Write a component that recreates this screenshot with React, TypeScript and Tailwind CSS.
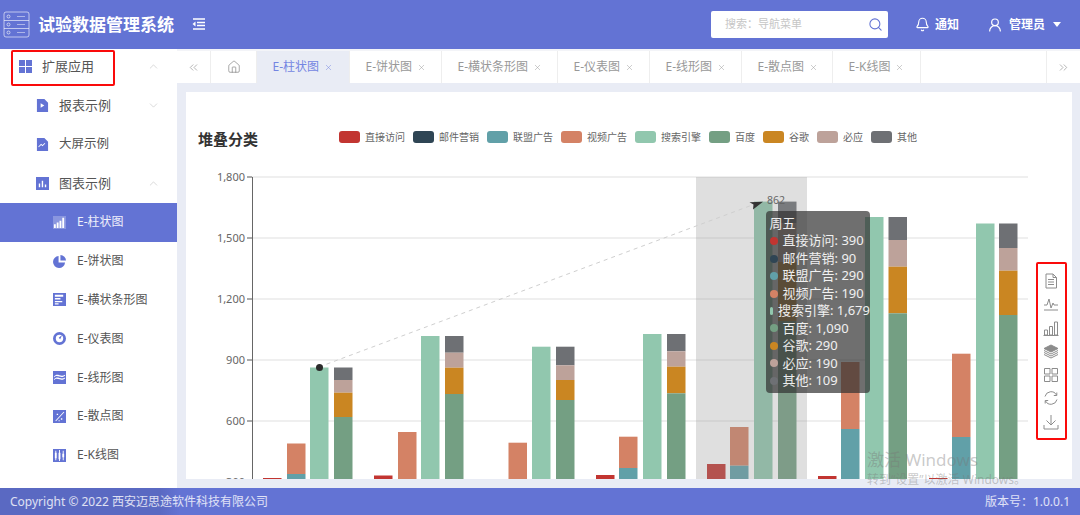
import { Bell, ChevronDown, ChevronsLeft, ChevronsRight, ChevronUp, House, Search, UserRound, X } from "lucide-react";
import type { ReactNode } from "react";

const c = {
  red: "#c23531",
  navy: "#2f4554",
  teal: "#61a0a8",
  orange: "#d48265",
  mint: "#91c7ae",
  green: "#749f83",
  gold: "#ca8622",
  rose: "#bda29a",
  gray: "#6e7074",
};

const legend = [
  { name: "直接访问", color: c.red },
  { name: "邮件营销", color: c.navy },
  { name: "联盟广告", color: c.teal },
  { name: "视频广告", color: c.orange },
  { name: "搜索引擎", color: c.mint },
  { name: "百度", color: c.green },
  { name: "谷歌", color: c.gold },
  { name: "必应", color: c.rose },
  { name: "其他", color: c.gray },
];

const tooltipRows = [
  { name: "直接访问", value: "390", color: c.red },
  { name: "邮件营销", value: "90", color: c.navy },
  { name: "联盟广告", value: "290", color: c.teal },
  { name: "视频广告", value: "190", color: c.orange },
  { name: "搜索引擎", value: "1,679", color: c.mint },
  { name: "百度", value: "1,090", color: c.green },
  { name: "谷歌", value: "290", color: c.gold },
  { name: "必应", value: "190", color: c.rose },
  { name: "其他", value: "109", color: c.gray },
];

// x of each bar group, then the tops of the stacked segments in page pixels
const groups = [
  { x: [263, 287, 310, 334], red: 478, orange: [443.5, 474], mint: 367.5, dark: [367.5, 380, 392.7, 417] },
  { x: [374, 398, 421, 445], red: 475.5, orange: [432, 490], mint: 336, dark: [336, 352.7, 367.7, 394] },
  { x: [485, 508.5, 532, 556], red: 490, orange: [442.7, 490], mint: 346.7, dark: [346.7, 365.3, 380, 400] },
  { x: [596, 619, 643, 667], red: 475, orange: [436.7, 468], mint: 334, dark: [334, 351.3, 366.7, 393.3] },
  { x: [707, 730, 754, 778], red: 464, orange: [427, 465.7], mint: 201.6, dark: [201.6, 223.4, 262, 321] },
  { x: [818, 841, 865, 888.5], red: 476, orange: [362, 429], mint: 217, dark: [217, 240, 266.7, 313.3] },
  { x: [929, 952, 976, 999], red: 478, orange: [353.7, 437], mint: 223.5, dark: [223.5, 248, 270.7, 315] },
];

const axis = [
  { label: "1,800", y: 177 },
  { label: "1,500", y: 238 },
  { label: "1,200", y: 299 },
  { label: "900", y: 360 },
  { label: "600", y: 421 },
  { label: "300", y: 482 },
];

const tabs = [
  { name: "E-柱状图", w: "w-[93px]", active: true },
  { name: "E-饼状图", w: "w-[92px]" },
  { name: "E-横状条形图", w: "w-[116px]" },
  { name: "E-仪表图", w: "w-[92px]" },
  { name: "E-线形图", w: "w-[92px]" },
  { name: "E-散点图", w: "w-[91px]" },
  { name: "E-K线图", w: "w-[88px]" },
];

const Glyph = ({ children, className = "text-[#6373d4]" }: { children: ReactNode; className?: string }) => (
  <svg viewBox="0 0 14 14" className={`h-[13px] w-[13px] shrink-0 ${className}`} fill="currentColor">
    {children}
  </svg>
);

const subItems: { name: string; icon: ReactNode; active?: boolean }[] = [
  {
    name: "E-柱状图",
    active: true,
    icon: (
      <>
        <path d="M0 0h14v14H0z" opacity=".25" />
        <path d="M1 9h2v4H1zM4 7h2v6H4zM7 5h2v8H7zM10 2h2v11h-2z" />
      </>
    ),
  },
  {
    name: "E-饼状图",
    icon: <path d="M6 1a6.5 6.5 0 1 0 7 7H6zM8 0v6h6a6 6 0 0 0-6-6z" />,
  },
  {
    name: "E-横状条形图",
    icon: <path fillRule="evenodd" d="M0 0h14v14H0zM2 2v2h9V2zM2 5.5v1.5h6V5.5zM2 8.5V10h8V8.5zM2 11v1.5h4V11z" />,
  },
  {
    name: "E-仪表图",
    icon: <path fillRule="evenodd" d="M7 0a7 7 0 1 1 0 14A7 7 0 0 1 7 0zm0 3a4 4 0 1 0 0 8 4 4 0 0 0 0-8zm3 0L6.2 6.2l1.5 1.5z" />,
  },
  {
    name: "E-线形图",
    icon: (
      <path
        fillRule="evenodd"
        d="M0 0h14v14H0zM1 7c2-2 3-2 6-1s4 0 6-1v-1c-2 1-3 1.600-6 .6S3 4 1 6zM1 10c2-2 3-2 6-1s4 0 6-1V7c-2 1-3 1.600-6 .6S3 7 1 9z"
      />
    ),
  },
  {
    name: "E-散点图",
    icon: <path fillRule="evenodd" d="M0 0h14v14H0zM11.500 2l-9 9.500.7.5 9-9.500zM4 4h1.500v1.500H4zM8.500 9H10v1.500H8.500zM6 11h1.200v1.200H6z" />,
  },
  {
    name: "E-K线图",
    icon: <path fillRule="evenodd" d="M0 0h14v14H0zM2.500 2v2H2v6h.5v2h1v-2H4V4h-.5V2zM6.500 1v3H6v7h.5v2h1v-2H8V4h-.5V1zM10.500 2v3H10v4h.5v3h1V9h.5V5h-.5V2z" />,
  },
];

const ToolIcon = ({ children }: { children: ReactNode }) => (
  <svg viewBox="0 0 16 16" className="h-4 w-4" fill="none" stroke="#8c8c8c" strokeWidth="1">
    {children}
  </svg>
);

const Chart = () => (
  <svg viewBox="186 165 886 314" className="block h-[314px] w-[886px]" fontSize="11">
    {axis.map((a) => (
      <g key={a.label}>
        <line x1="247" x2="1028" y1={a.y} y2={a.y} stroke="#e0e0e0" strokeWidth="1.2" />
        <line x1="247" x2="252" y1={a.y} y2={a.y} stroke="#666" />
        <text x="245" y={a.y + 4} textAnchor="end" fill="#666">
          {a.label}
        </text>
      </g>
    ))}
    <line x1="252.500" x2="252.500" y1="177" y2="479" stroke="#666" />
    {groups.map((g) => (
      <g key={g.x[0]}>
        <rect x={g.x[0]} y={g.red} width="18.500" height={490 - g.red} fill={c.red} />
        <rect x={g.x[1]} y={g.orange[0]} width="18.500" height={g.orange[1] - g.orange[0]} fill={c.orange} />
        <rect x={g.x[1]} y={g.orange[1]} width="18.500" height={490 - g.orange[1]} fill={c.teal} />
        <rect x={g.x[2]} y={g.mint} width="18.500" height={490 - g.mint} fill={c.mint} />
        <rect x={g.x[3]} y={g.dark[0]} width="18.500" height={g.dark[1] - g.dark[0]} fill={c.gray} />
        <rect x={g.x[3]} y={g.dark[1]} width="18.500" height={g.dark[2] - g.dark[1]} fill={c.rose} />
        <rect x={g.x[3]} y={g.dark[2]} width="18.500" height={g.dark[3] - g.dark[2]} fill={c.gold} />
        <rect x={g.x[3]} y={g.dark[3]} width="18.500" height={490 - g.dark[3]} fill={c.green} />
      </g>
    ))}
    <rect x="696" y="177" width="111" height="302" fill="rgb(150 150 150 / 0.3)" />
    <line x1="319" y1="367" x2="755" y2="204" stroke="#cfcfcf" strokeDasharray="4 4" />
    <circle cx="319.500" cy="367.500" r="3.500" fill="#2b2b2b" />
    <path d="M763 201.700 L749.500 202.300 L753.500 204.500 L753 209.500 Z" fill="#333" />
    <text x="767" y="204" fill="#666" fontSize="10.500">
      862
    </text>
  </svg>
);

export default function App() {
  return (
    <div className="relative flex h-[515px] w-[1080px] flex-col overflow-hidden bg-white [font-family:'Noto_Sans','Noto_Sans_CJK_SC',sans-serif]">
      <header className="relative z-10 flex h-[49px] shrink-0 items-center bg-[#6373d4] text-white">
        <div className="flex w-[177px] items-center pl-[3px]">
          <svg viewBox="0 0 27 27" className="h-[27px] w-[27px] shrink-0 text-white/60" fill="none" stroke="currentColor">
            <rect x="1" y="1" width="25" height="25" rx="2" />
            <path d="M1 9.500h25M1 17.500h25" />
            <circle cx="5.500" cy="5.500" r="1.500" />
            <circle cx="5.500" cy="13.500" r="1.500" />
            <circle cx="5.500" cy="21.500" r="1.500" />
            <path d="M14 5.500h8M14 13.500h8M14 21.500h8" strokeWidth=".8" />
          </svg>
          <span className="ml-[8px] whitespace-nowrap text-[17px] leading-none font-bold">试验数据管理系统</span>
        </div>
        <svg viewBox="0 0 13 12" className="ml-[15px] -mt-[1px] h-[12px] w-[13px]" stroke="white" strokeWidth="1.300" fill="white">
          <path d="M1 1h12M5 4.500h8M5 7.500h8M1 11h12" />
          <path d="M3.500 3.500v5L.5 6z" stroke="none" />
        </svg>
        <div className="ml-[506px] flex h-[27px] w-[177px] items-center justify-between rounded-[2px] bg-white pr-[5px] pl-[14px]">
          <span className="text-[11px] text-[#c6c6c6]">搜索：导航菜单</span>
          <Search size={15} className="text-[#6373d4]" strokeWidth={1.700} />
        </div>
        <Bell size={15} className="ml-[27px]" strokeWidth={1.800} />
        <span className="ml-[5px] text-[12px] font-bold">通知</span>
        <UserRound size={16} className="ml-[28px]" strokeWidth={1.800} />
        <span className="ml-[6px] text-[12px] font-bold">管理员</span>
        <span className="ml-[8px] h-0 w-0 border-x-[4.500px] border-t-[5px] border-x-transparent border-t-white" />
      </header>

      <div className="flex min-h-0 flex-1">
        <aside className="w-[177px] shrink-0 bg-white text-[#555]">
          <div className="relative -mt-[2px] flex h-[39px] items-center pr-[17px] pl-[19px] text-[13px]">
            <svg viewBox="0 0 13 13" className="h-[13px] w-[13px]" fill="#6373d4">
              <path d="M0 0h6v6H0zM7 0h6v6H7zM0 7h6v6H0zM7 7h6v6H7z" />
            </svg>
            <span className="ml-[10px] flex-1">扩展应用</span>
            <ChevronUp size={13} strokeWidth={1} className="text-[#bbb]" />
            <div className="absolute top-[2.500px] left-[11px] h-[36px] w-[104px] rounded-[2px] border-2 border-[#fa0a0a]" />
          </div>
          <div className="flex h-[39px] items-center pr-[17px] pl-[36px] text-[13px]">
            <Glyph>
              <path fillRule="evenodd" d="M1 0h8l4 4v10H1zM5 4.500v5l4-2.500z" />
            </Glyph>
            <span className="ml-[10px] flex-1">报表示例</span>
            <ChevronDown size={13} strokeWidth={1} className="text-[#bbb]" />
          </div>
          <div className="flex h-[39px] items-center pl-[36px] text-[12.500px]">
            <Glyph>
              <path fillRule="evenodd" d="M1 0h8l4 4v10H1zM3 10l2.500-2.500L7 9l3-3-.7-.6L7 7.600 5.500 6.100 2.400 9.300z" />
            </Glyph>
            <span className="ml-[10px] flex-1">大屏示例</span>
          </div>
          <div className="flex h-[39px] items-center pr-[17px] pl-[36px] text-[13px]">
            <Glyph>
              <path fillRule="evenodd" d="M0 0h14v14H0zM3 7v4h1.500V7zM6.200 4v7h1.500V4zM9.500 8v3H11V8z" />
            </Glyph>
            <span className="ml-[10px] flex-1">图表示例</span>
            <ChevronUp size={13} strokeWidth={1} className="text-[#bbb]" />
          </div>
          {subItems.map((item) => (
            <div
              key={item.name}
              className={`flex h-[38.800px] items-center pl-[53px] text-[12px] ${item.active ? "bg-[#6373d4] text-white/90" : ""}`}
            >
              <Glyph className={item.active ? "text-white" : "text-[#6373d4]"}>{item.icon}</Glyph>
              <span className="ml-[11px]">{item.name}</span>
            </div>
          ))}
        </aside>

        <main className="flex min-w-0 flex-1 flex-col bg-[#e9ecf5]">
          <nav className="-mt-[0px] flex h-[34px] shrink-0 border-t-2 border-[#f3f4f8] bg-white text-[12px] text-[#999]">
            <div className="flex w-[34px] items-center justify-center border-r border-[#eee]">
              <ChevronsLeft size={13} strokeWidth={1.300} />
            </div>
            <div className="flex w-[46px] items-center justify-center border-r border-[#eee]">
              <House size={14} strokeWidth={1.100} className="text-[#777]" />
            </div>
            {tabs.map((t) => (
              <div
                key={t.name}
                className={`flex items-center border-r border-[#eee] pl-[15.500px] ${t.w} ${t.active ? "bg-[#e9ecf5] text-[#7485e2]" : ""}`}
              >
                {t.name}
                <X size={9} strokeWidth={1.300} className="ml-[5px]" />
              </div>
            ))}
            <div className="flex-1 border-r border-[#eee]" />
            <div className="flex w-[33px] items-center justify-center">
              <ChevronsRight size={13} strokeWidth={1.300} />
            </div>
          </nav>

          <div className="min-h-0 flex-1 pt-[9px] pr-[8px] pb-[9px] pl-[9px]">
            <section className="relative h-full overflow-hidden bg-white">
              <div className="flex h-[73px] items-start pt-[36px]">
                <h2 className="w-[153px] pl-[12px] text-[15px] leading-[22px] font-bold text-[#333]">堆叠分类</h2>
                <ul className="-mt-[1px] flex gap-[8px] text-[10px] leading-[20px] text-[#666]">
                  {legend.map((l) => (
                    <li key={l.name} className="flex items-center gap-[5px]">
                      <span className="h-[12.500px] w-[21px] rounded-[3px]" style={{ backgroundColor: l.color }} />
                      {l.name}
                    </li>
                  ))}
                </ul>
              </div>
              <Chart />

              <div className="absolute top-[119px] left-[580px] h-[182px] w-[104px] rounded-[4px] bg-[rgb(50_50_50/0.7)] pt-[4px] pl-[3.500px] text-[13px] leading-[17.450px] whitespace-nowrap text-white/90">
                <div>周五</div>
                {tooltipRows.map((r) => (
                  <div key={r.name} className="flex items-center">
                    <span className="mr-[4.500px] ml-[0.500px] h-[8px] w-[8px] rounded-full" style={{ backgroundColor: r.color }} />
                    {r.name}: {r.value}
                  </div>
                ))}
              </div>

              <div className="absolute top-[170px] left-[849.500px] flex h-[178px] w-[31px] flex-col items-center justify-center gap-[7.500px] rounded-[2px] border-2 border-[#fa0a0a]">
                <ToolIcon>
                  <path d="M3 1h7l3.500 3.500V15H3zM10 1v3.500h3.500M5 6.500h6M5 9h6M5 11.500h6" />
                </ToolIcon>
                <ToolIcon>
                  <path d="M1 9h3l2-6 2 9 2-5 1 2h4M1 14h14" />
                </ToolIcon>
                <ToolIcon>
                  <path d="M1.500 10h3v5h-3zM6.500 6.500h3V15h-3zM11.500 2h3v13h-3zM.5 15.500h15" />
                </ToolIcon>
                <ToolIcon>
                  <path d="M8 2l7 3.500-7 3.500-7-3.500z" fill="#8c8c8c" />
                  <path d="M1 7.500L8 11l7-3.500M1 9.500L8 13l7-3.500M1 11.500L8 15l7-3.500" />
                </ToolIcon>
                <ToolIcon>
                  <path d="M1.500 1.500h5.500v5.500H1.500zM9 1.500h5.500v5.500H9zM1.500 9h5.500v5.500H1.500zM9 9h5.500v5.500H9z" />
                </ToolIcon>
                <ToolIcon>
                  <path d="M2 6.500A6.200 6.200 0 0 1 13.500 5M14 9.500A6.200 6.200 0 0 1 2.500 11M13.800 2.500v3h-3M2.200 13.500v-3h3" />
                </ToolIcon>
                <ToolIcon>
                  <path d="M8 1v10M3.500 6.500L8 11l4.500-4.500M1 11v4h14v-4" />
                </ToolIcon>
              </div>
            </section>
          </div>
        </main>
      </div>

      <footer className="flex h-[27px] shrink-0 items-center justify-between bg-[linear-gradient(90deg,#5a69c2_160px,#6373d4_180px)] pr-[10px] pl-[10px] text-[12px] text-white/80">
        <span>Copyright © 2022 西安迈思途软件科技有限公司</span>
        <span>版本号：1.0.0.1</span>
      </footer>

      <div className="pointer-events-none absolute top-[449px] left-[867px] whitespace-nowrap text-[rgb(120_120_120/0.4)]">
        <div className="text-[17px] leading-[22px]">激活 Windows</div>
        <div className="mt-[1px] text-[12px] leading-[16px]">转到“设置”以激活 Windows。</div>
      </div>
    </div>
  );
}
